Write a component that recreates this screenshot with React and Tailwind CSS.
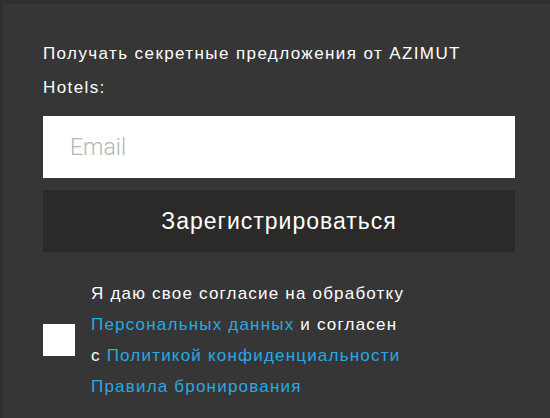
export default function App() {
  return (
    <div className="w-[550px] h-[418px] bg-[#2f2f2f] pt-[4px] pl-[3px] overflow-hidden" style={{ fontFamily: '"Liberation Sans", Arial, sans-serif' }}>
      <div className="h-full bg-[#363636] pl-[40px] pr-[35px] pt-[33px]">
        <p className="text-white text-[17px] leading-[34px] tracking-[1.4px]">
          Получать секретные предложения от AZIMUT Hotels:
        </p>
        <form className="mt-[11px] flex flex-col gap-[12px]">
          <input
            type="email"
            placeholder="Email"
            className="h-[62px] w-full bg-white px-[27px] text-[23px] font-light text-gray-800 placeholder:text-[#b5b5b5] outline-none"
            style={{ fontFamily: 'Roboto, sans-serif' }}
          />
          <button type="button" className="h-[62px] w-full bg-[#2b2a28] text-white text-[23px] tracking-[1px]">
            Зарегистрироваться
          </button>
        </form>
        <div className="mt-[26px] flex items-center gap-[16px]">
          <span className="w-[32px] h-[32px] bg-white shrink-0"></span>
          <p className="text-white text-[17px] leading-[31px] tracking-[1.2px]">
            Я даю свое согласие на обработку<br />
            <a className="text-[#2aa8e2]">Персональных данных</a> и согласен<br />
            с <a className="text-[#2aa8e2]">Политикой конфиденциальности</a><br />
            <a className="text-[#2aa8e2]">Правила бронирования</a>
          </p>
        </div>
      </div>
    </div>
  )
}
